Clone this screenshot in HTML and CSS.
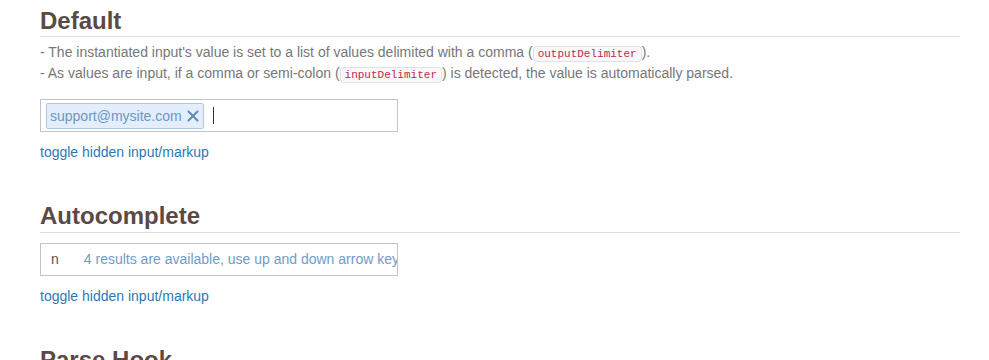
FILE: index.html
```html
<!DOCTYPE html>
<html lang="en">
<head>
  <meta charset="UTF-8">
  <meta name="viewport" content="width=device-width, initial-scale=1.0">
  <title>Multi-value Input Demos</title>
  <link rel="stylesheet" href="styles.css">
</head>
<body>

  <div class="page">

    <!-- Default -->
    <section class="demo">
      <h2>Default</h2>
      <p class="notes">
        - The instantiated input's value is set to a list of values delimited with a comma (<code>outputDelimiter</code>).<br>
        - As values are input, if a comma or semi-colon (<code>inputDelimiter</code>) is detected, the value is automatically parsed.
      </p>
      <div class="tag-input">
        <span class="tag">support@mysite.com
          <span class="tag-remove">
            <svg width="12" height="12" viewBox="0 0 12 12"><path d="M1.5 1.5 L10.5 10.5 M10.5 1.5 L1.5 10.5" stroke="currentColor" stroke-width="2" stroke-linecap="round"/></svg>
          </span>
        </span>
        <span class="caret"></span>
      </div>
      <a class="toggle" href="#">toggle hidden input/markup</a>
    </section>

    <!-- Autocomplete -->
    <section class="demo">
      <h2>Autocomplete</h2>
      <div class="tag-input auto">
        <span class="typed">n</span>
        <span class="status">4 results are available, use up and down arrow keys to navigate.</span>
      </div>
      <a class="toggle" href="#">toggle hidden input/markup</a>
    </section>

    <!-- Parse Hook -->
    <section class="demo">
      <h2>Parse Hook</h2>
    </section>

  </div>

</body>
</html>
```

FILE: styles.css
```css
/* General Styles */
body {
  font-family: "Liberation Sans", Arial, sans-serif;
  color: #777;
  background-color: #fff;
  margin: 0;
}

.page {
  width: 920px;
  margin-left: 40px;
  padding-top: 8px;
}

.demo {
  margin-bottom: 41px;
}

.demo h2 {
  margin: 0;
  padding-bottom: 2px;
  font-size: 24px;
  line-height: 1.1;
  font-weight: bold;
  color: #5a4a45;
  border-bottom: 1px solid #ddd;
}

.notes {
  margin: 5px 0 0;
  font-size: 14px;
  line-height: 21px;
}

code {
  font-family: "Liberation Mono", "DejaVu Sans Mono", monospace;
  font-size: 11px;
  line-height: 14px;
  color: #c7254e;
  background-color: #f9f9f9;
  border: 1px solid #e1e1e8;
  border-radius: 4px;
  padding: 1px 4px;
}

/* Tag input */
.tag-input {
  box-sizing: border-box;
  width: 358px;
  height: 33px;
  margin-top: 15px;
  padding: 2px 5px;
  border: 1px solid #c4c4c4;
  display: flex;
  align-items: center;
  overflow: hidden;
  white-space: nowrap;
  font-size: 14px;
}

.tag {
  box-sizing: border-box;
  height: 26px;
  display: flex;
  align-items: center;
  gap: 5px;
  padding: 0 4px 0 3px;
  color: #6a98c7;
  background-color: #e3eefa;
  border: 1px solid #abc8e6;
  border-radius: 2px;
}

.tag-remove {
  display: flex;
  color: #5a8cbf;
  cursor: pointer;
}

.caret {
  width: 1px;
  height: 17px;
  margin-left: 9px;
  background-color: #333;
}

.tag-input.auto {
  margin-top: 10px;
  padding-left: 9px;
}

.typed {
  color: #555;
  margin-left: 1px;
}

.status {
  margin-left: 25px;
  color: #6f9bc8;
}

.toggle {
  display: block;
  margin-top: 10px;
  font-size: 14px;
  line-height: 20px;
  color: #2a7ab8;
  text-decoration: none;
}
```
